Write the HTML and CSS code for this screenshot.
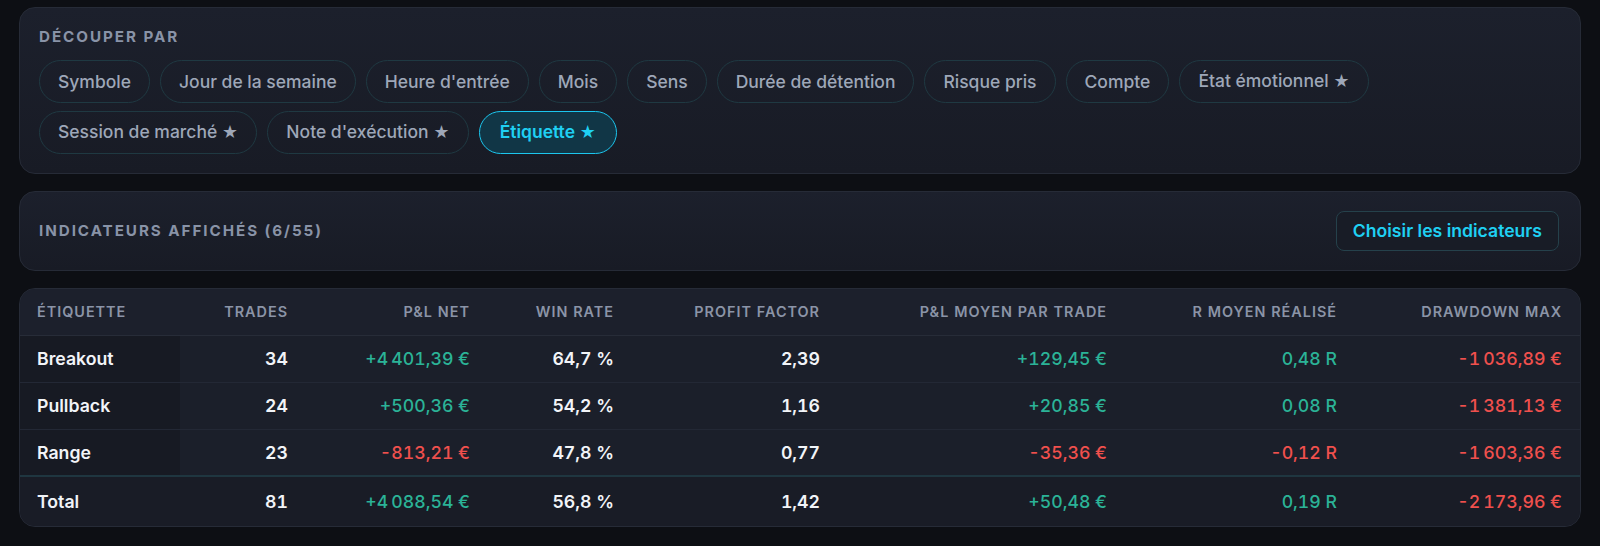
FILE: index.html
```html
<!DOCTYPE html>
<html lang="fr">
<head>
<meta charset="utf-8">
<title>Découper par</title>
<link rel="stylesheet" href="styles.css">
</head>
<body>
<main class="page">
  <section class="card split">
    <h2 class="card-title">Découper par</h2>
    <div class="chips">
      <button class="chip">Symbole</button>
      <button class="chip">Jour de la semaine</button>
      <button class="chip">Heure d'entrée</button>
      <button class="chip">Mois</button>
      <button class="chip">Sens</button>
      <button class="chip">Durée de détention</button>
      <button class="chip">Risque pris</button>
      <button class="chip">Compte</button>
      <button class="chip">État émotionnel <span class="star">★</span></button>
      <button class="chip">Session de marché <span class="star">★</span></button>
      <button class="chip">Note d'exécution <span class="star">★</span></button>
      <button class="chip active">Étiquette <span class="star">★</span></button>
    </div>
  </section>

  <section class="card indicators">
    <h2 class="card-title">Indicateurs affichés (6/55)</h2>
    <button class="btn-outline">Choisir les indicateurs</button>
  </section>

  <section class="card table-card">
    <table class="stats">
      <thead>
        <tr>
          <th class="c-label">Étiquette</th>
          <th>Trades</th>
          <th>P&amp;L net</th>
          <th>Win rate</th>
          <th>Profit factor</th>
          <th>P&amp;L moyen par trade</th>
          <th>R moyen réalisé</th>
          <th>Drawdown max</th>
        </tr>
      </thead>
      <tbody>
        <tr>
          <td class="c-label">Breakout</td>
          <td>34</td>
          <td class="pos">+4&#8239;401,39&nbsp;€</td>
          <td>64,7&nbsp;%</td>
          <td>2,39</td>
          <td class="pos">+129,45&nbsp;€</td>
          <td class="pos">0,48&nbsp;R</td>
          <td class="neg">-1&#8239;036,89&nbsp;€</td>
        </tr>
        <tr>
          <td class="c-label">Pullback</td>
          <td>24</td>
          <td class="pos">+500,36&nbsp;€</td>
          <td>54,2&nbsp;%</td>
          <td>1,16</td>
          <td class="pos">+20,85&nbsp;€</td>
          <td class="pos">0,08&nbsp;R</td>
          <td class="neg">-1&#8239;381,13&nbsp;€</td>
        </tr>
        <tr>
          <td class="c-label">Range</td>
          <td>23</td>
          <td class="neg">-813,21&nbsp;€</td>
          <td>47,8&nbsp;%</td>
          <td>0,77</td>
          <td class="neg">-35,36&nbsp;€</td>
          <td class="neg">-0,12&nbsp;R</td>
          <td class="neg">-1&#8239;603,36&nbsp;€</td>
        </tr>
      </tbody>
      <tfoot>
        <tr>
          <td class="c-label">Total</td>
          <td>81</td>
          <td class="pos">+4&#8239;088,54&nbsp;€</td>
          <td>56,8&nbsp;%</td>
          <td>1,42</td>
          <td class="pos">+50,48&nbsp;€</td>
          <td class="pos">0,19&nbsp;R</td>
          <td class="neg">-2&#8239;173,96&nbsp;€</td>
        </tr>
      </tfoot>
    </table>
  </section>

  <p class="note">Les dimensions marquées d'une ★ proviennent des informations saisies dans le journal de chaque trade.</p>
</main>
</body>
</html>
```

FILE: styles.css
```css
* { box-sizing: border-box; }

html, body {
  margin: 0;
  padding: 0;
  background: #0d0f14;
  font-family: Inter, "Noto Sans", "Liberation Sans", sans-serif;
  color: #e8ebf1;
}

.page {
  padding: 7px 19px 0 19px;
  display: flex;
  flex-direction: column;
  gap: 17px;
}

.card {
  background: linear-gradient(180deg, #1c202c 0%, #181b25 100%);
  border: 1px solid #262b37;
  border-radius: 16px;
}

.card-title {
  margin: 0;
  font-size: 15.2px;
  line-height: 18px;
  font-weight: 700;
  letter-spacing: 1.95px;
  text-transform: uppercase;
  color: #8993a7;
}

/* Découper par */
.split {
  padding: 20px 19px 19px 19px;
}

.split .card-title {
  margin-bottom: 14px;
}

.chips {
  display: flex;
  flex-wrap: wrap;
  gap: 8px 10px;
}

.chip {
  font-family: inherit;
  font-size: 17.5px;
  line-height: 22px;
  font-weight: 500;
  color: #9ea7b8;
  background: transparent;
  border: 1px solid #1f3942;
  border-radius: 999px;
  padding: 9px 18px;
  white-space: nowrap;
}

.chip .star {
  font-size: 0.9em;
}

.chip.active {
  background: #113646;
  border-color: #1cc6ee;
  color: #1fd0f3;
  font-weight: 600;
  padding: 9px 20px;
}

/* Indicateurs */
.indicators {
  padding: 19px 21px 19px 19px;
  display: flex;
  align-items: center;
  justify-content: space-between;
}

.btn-outline {
  font-family: inherit;
  font-size: 17.6px;
  line-height: 20px;
  font-weight: 600;
  color: #1fd0f3;
  background: #181c26;
  border: 1px solid #25414b;
  border-radius: 8px;
  padding: 9px 16px;
}

/* Table */
.table-card {
  overflow: hidden;
}

.stats {
  width: 100%;
  border-collapse: collapse;
  table-layout: fixed;
  font-variant-numeric: tabular-nums;
}

.stats th,
.stats td {
  text-align: right;
  padding: 0 18px 0 10px;
  white-space: nowrap;
}

.stats th {
  height: 46px;
  font-size: 14.4px;
  font-weight: 600;
  letter-spacing: 1px;
  text-transform: uppercase;
  color: #8b94a7;
  background: #1c202c;
  border-bottom: 1px solid #272c38;
}

.stats th:nth-child(1) { width: 160px; }
.stats th:nth-child(2) { width: 126px; }
.stats th:nth-child(3) { width: 182px; }
.stats th:nth-child(4) { width: 144px; }
.stats th:nth-child(5) { width: 206px; }
.stats th:nth-child(6) { width: 287px; }
.stats th:nth-child(7) { width: 230px; }
.stats th:nth-child(8) { width: 225px; }

.stats td {
  height: 47px;
  font-size: 17.7px;
  font-weight: 600;
  color: #f2f4f8;
  border-bottom: 1px solid #232835;
}

.stats tbody td {
  background: #1b1f2a;
}

.stats .c-label {
  text-align: left;
  padding-left: 17px;
}

.stats tbody td.c-label {
  background: #171a23;
}

.stats tfoot td {
  height: 50px;
  border-top: 2px solid #1f3640;
  border-bottom: none;
  background: #191c26;
}

.stats td.pos { color: #2bb397; font-weight: 500; }
.stats td.neg { color: #f0504d; font-weight: 500; }

.note {
  margin: 14px 0 0 19px;
  font-size: 15px;
  color: #6e7689;
}
```
